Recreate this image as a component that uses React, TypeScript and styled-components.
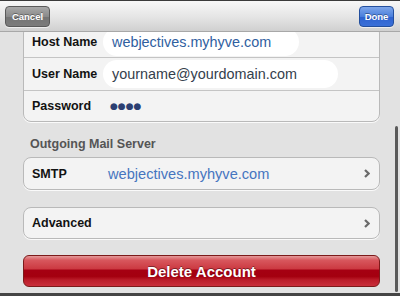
import styled, { createGlobalStyle } from "styled-components";

const GlobalStyle = createGlobalStyle`
    html, body {
        margin: 0;
        padding: 0;
        background: #e2e2e2;
    }
    * {
        box-sizing: border-box;
    }
`

const Screen = styled.div`
    position: relative;
    display: flex;
    flex-direction: column;
    width: 400px;
    height: 296px;
    overflow: hidden;
    background: #e2e2e2;
    font-family: "Liberation Sans", Arial, Helvetica, sans-serif;
    border-top: 1px solid #3a3a3a;
`

const TopBar = styled.div`
    display: flex;
    align-items: center;
    justify-content: space-between;
    height: 31px;
    flex-shrink: 0;
    padding: 0 6px 0 5px;
    background: linear-gradient(#f7f7f7, #e6e6e6 50%, #d0d0d0);
    border-bottom: 1px solid #a8a8a8;
    position: relative;
    z-index: 2;
`

const BarButton = styled.button<{ $tone: "gray" | "blue"; $w: number }>`
    width: ${({ $w }) => $w}px;
    height: 21px;
    padding: 0;
    border-radius: 4px;
    font-family: inherit;
    font-size: 9.5px;
    font-weight: bold;
    color: #fff;
    text-shadow: 0 -1px 0 rgba(0, 0, 0, 0.35);
    border: 1px solid ${({ $tone }) => ($tone === "blue" ? "#234f9e" : "#5a5a5a")};
    background: ${({ $tone }) =>
        $tone === "blue"
            ? "linear-gradient(#7ea6ea, #4a7fdc 50%, #2e62cf 52%, #3a70d8)"
            : "linear-gradient(#a9a9a9, #8a8a8a 50%, #747474 52%, #7c7c7c)"};
    box-shadow: 0 1px 0 rgba(255, 255, 255, 0.6);
`

const Content = styled.div`
    flex: 1;
    overflow: hidden;
    padding: 0 20px 0 23px;
`

/* the list is scrolled a little: first row partly under the bar */
const Scroll = styled.div`
    display: flex;
    flex-direction: column;
    margin-top: -7px;
`

const Card = styled.div<{ $gap?: number }>`
    display: flex;
    flex-direction: column;
    margin-top: ${({ $gap }) => $gap ?? 0}px;
    background: #f3f3f3;
    border: 1px solid #b9b9b9;
    border-radius: 8px;
    box-shadow: 0 1px 0 #fafafa;
    overflow: hidden;
`

const Row = styled.div<{ $h?: number }>`
    display: flex;
    align-items: center;
    height: ${({ $h }) => $h ?? 31}px;
    padding: 0 9px 0 8px;
    & + & {
        border-top: 1px solid #c4c4c4;
    }
`

const Label = styled.span`
    width: 71px;
    flex-shrink: 0;
    font-size: 12.5px;
    font-weight: bold;
    color: #121212;
`

const Field = styled.div<{ $w: number; $color: string }>`
    display: flex;
    align-items: center;
    width: ${({ $w }) => $w}px;
    height: 28px;
    padding-left: 9px;
    border-radius: 14px;
    background: #ffffff;
    font-size: 14.4px;
    color: ${({ $color }) => $color};
`

const Dots = styled.span`
    margin-left: 7px;
    font-family: "DejaVu Sans", sans-serif;
    font-size: 9px;
    color: #2c3f72;
`

const Value = styled.span`
    flex: 1;
    margin-left: 5px;
    font-size: 14.6px;
    color: #4675bf;
`

const Chevron = styled.svg`
    margin-left: auto;
    width: 6px;
    height: 9px;
    flex-shrink: 0;
`

const Header = styled.div`
    margin-top: 15px;
    padding-left: 7px;
    height: 15px;
    line-height: 15px;
    font-size: 12.5px;
    font-weight: bold;
    color: #555;
`

const DeleteButton = styled.button`
    margin-top: 16px;
    height: 32px;
    width: 100%;
    border-radius: 6px;
    border: 1px solid #7c1a1a;
    font-family: inherit;
    font-size: 15px;
    font-weight: bold;
    color: #fff;
    text-shadow: 0 -1px 0 rgba(0, 0, 0, 0.4);
    background: linear-gradient(
        #e49a9a 0%,
        #d8575d 14%,
        #cc3a42 42%,
        #a50012 48%,
        #a4000f 68%,
        #bb1d2a 80%,
        #c92f3b 100%
    );
`

const BottomEdge = styled.div`
    height: 3px;
    flex-shrink: 0;
    background: #454545;
`

const ScrollThumb = styled.div`
    position: absolute;
    right: 2px;
    top: 125px;
    width: 3px;
    height: 166px;
    border-radius: 2px;
    background: #5a5a5a;
`

const Arrow = () => (
    <Chevron viewBox="0 0 6 9">
        <polyline points="1,1 4.6,4.5 1,8" fill="none" stroke="#6a6a6a" strokeWidth="2.2" />
    </Chevron>
)

const App = () => {
    return (
        <>
            <GlobalStyle />
            <Screen>
                <TopBar>
                    <BarButton $tone="gray" $w={45}>Cancel</BarButton>
                    <BarButton $tone="blue" $w={35}>Done</BarButton>
                </TopBar>
                <Content>
                    <Scroll>
                        <Card>
                            <Row>
                                <Label>Host Name</Label>
                                <Field $w={196} $color="#30609f">webjectives.myhyve.com</Field>
                            </Row>
                            <Row $h={33}>
                                <Label>User Name</Label>
                                <Field $w={235} $color="#34404c">yourname@yourdomain.com</Field>
                            </Row>
                            <Row>
                                <Label>Password</Label>
                                <Dots>●●●●</Dots>
                            </Row>
                        </Card>
                        <Header>Outgoing Mail Server</Header>
                        <Card $gap={5}>
                            <Row>
                                <Label>SMTP</Label>
                                <Value>webjectives.myhyve.com</Value>
                                <Arrow />
                            </Row>
                        </Card>
                        <Card $gap={17}>
                            <Row $h={30}>
                                <Label>Advanced</Label>
                                <Arrow />
                            </Row>
                        </Card>
                        <DeleteButton>Delete Account</DeleteButton>
                    </Scroll>
                </Content>
                <BottomEdge />
                <ScrollThumb />
            </Screen>
        </>
    )
}

export default App;
